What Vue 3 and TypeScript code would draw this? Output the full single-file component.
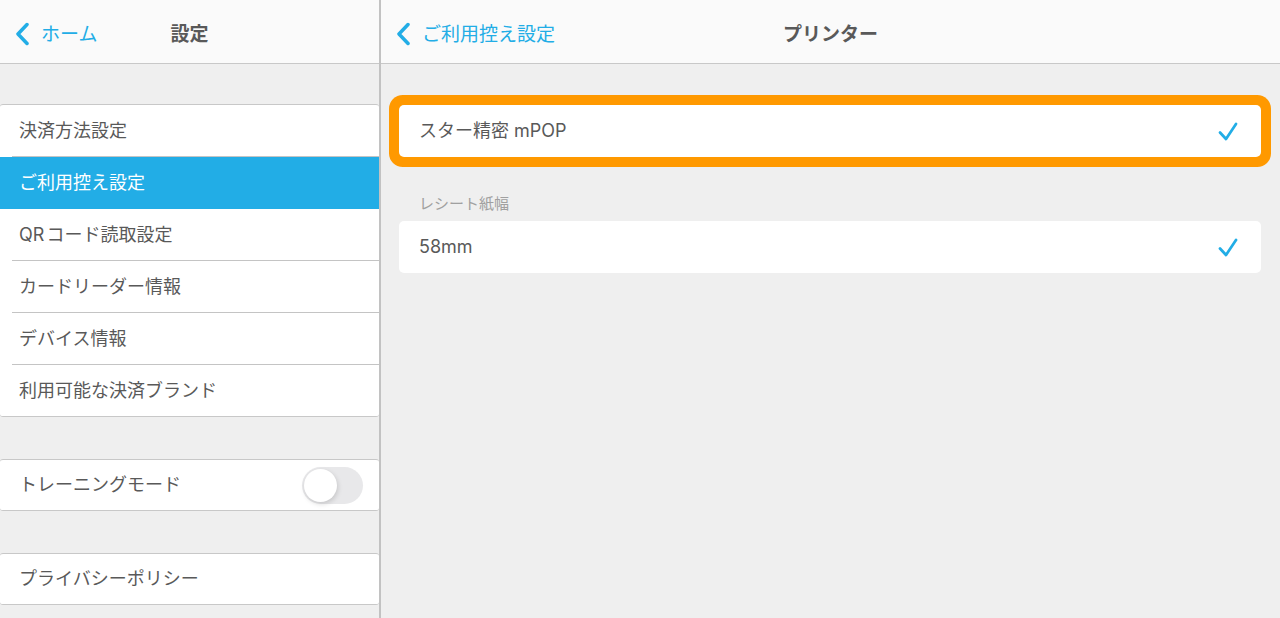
<script setup lang="ts">
import { ref } from 'vue'

interface MenuItem {
  id: string
  label: string
}

const menu: MenuItem[] = [
  { id: 'payment', label: '決済方法設定' },
  { id: 'receipt', label: 'ご利用控え設定' },
  { id: 'qr', label: 'QRコード読取設定' },
  { id: 'reader', label: 'カードリーダー情報' },
  { id: 'device', label: 'デバイス情報' },
  { id: 'brands', label: '利用可能な決済ブランド' },
]

const selected = ref<string>('receipt')
const training = ref<boolean>(false)
const printer = ref<string>('mpop')
const paper = ref<string>('58mm')
</script>

<template>
  <div class="app">
    <aside class="sidebar">
      <header class="bar">
        <a class="back" href="#home">
          <svg class="chevron" viewBox="0 0 14 24" aria-hidden="true"><path d="M12 2.5 L3 12 L12 21.5" /></svg>
          <span class="text">ホーム</span>
        </a>
        <h1 class="title text">設定</h1>
      </header>

      <nav class="group">
        <a
          v-for="item in menu"
          :key="item.id"
          class="row"
          :class="{ active: item.id === selected }"
          :href="'#' + item.id"
          @click="selected = item.id"
        ><span class="label">{{ item.label }}</span></a>
      </nav>

      <div class="group">
        <label class="row single" for="training">
          <span class="label">トレーニングモード</span>
          <input id="training" v-model="training" class="switch" type="checkbox" role="switch" />
        </label>
      </div>

      <div class="group">
        <a class="row single" href="#privacy"><span class="label">プライバシーポリシー</span></a>
      </div>
    </aside>

    <main class="detail">
      <header class="bar">
        <a class="back" href="#receipt">
          <svg class="chevron" viewBox="0 0 14 24" aria-hidden="true"><path d="M12 2.5 L3 12 L12 21.5" /></svg>
          <span class="text">ご利用控え設定</span>
        </a>
        <h2 class="title text">プリンター</h2>
      </header>

      <div class="content">
        <label class="card highlight" for="printer-mpop">
          <span>スター精密 mPOP</span>
          <span class="tick">
            <input id="printer-mpop" v-model="printer" type="radio" name="printer" value="mpop" />
            <svg viewBox="0 0 20 20" aria-hidden="true"><path d="M2 11.5 L8 18 L18 3" /></svg>
          </span>
        </label>

        <h3 class="section">レシート紙幅</h3>
        <label class="card" for="paper-58">
          <span>58mm</span>
          <span class="tick">
            <input id="paper-58" v-model="paper" type="radio" name="paper" value="58mm" />
            <svg viewBox="0 0 20 20" aria-hidden="true"><path d="M2 11.5 L8 18 L18 3" /></svg>
          </span>
        </label>
      </div>
    </main>
  </div>
</template>

<style>
body {
  margin: 0;
  background: #efefef;
}
</style>

<style scoped>
.app {
  display: grid;
  grid-template-columns: 381px 1fr;
  height: 100vh;
  overflow: hidden;
  background: #efefef;
  color: #595959;
  font-family: Inter, "Noto Sans CJK JP", sans-serif;
  font-size: 18px;
  line-height: 24px;
  text-autospace: normal;
}

a {
  color: inherit;
  text-decoration: none;
}

.sidebar {
  box-sizing: border-box;
  border-right: 2px solid #c2c2c2;
  overflow: hidden;
}

.bar {
  box-sizing: border-box;
  height: 64px;
  display: grid;
  grid-template-columns: 1fr auto 1fr;
  align-items: center;
  padding: 4px 15px 0;
  background: #fafafa;
  border-bottom: 1px solid #c8c8c8;
  font-size: 19px;
}

.text {
  padding-top: 2px;
}

.back {
  display: flex;
  align-items: center;
  gap: 12px;
  color: #22ade6;
  white-space: nowrap;
}

.chevron {
  width: 14px;
  height: 24px;
  fill: none;
  stroke: #22ade6;
  stroke-width: 3.5;
  stroke-linecap: round;
  stroke-linejoin: round;
}

.title {
  margin: 0;
  font-size: 19px;
  font-weight: 700;
}

.group {
  margin-top: 40px;
  border-top: 1px solid #c8c8c8;
  border-bottom: 1px solid #c8c8c8;
  border-radius: 3px;
  background: #fff;
}

.group + .group {
  margin-top: 42px;
}

.row {
  box-sizing: border-box;
  height: 52px;
  display: flex;
  align-items: center;
  padding-left: 12px;
}

.row .label {
  box-sizing: border-box;
  flex: 1;
  height: 100%;
  padding: 14px 0 0 7px;
}

.row:not(:last-child) .label {
  border-bottom: 1px solid #c4c4c4;
}

.row:last-child {
  height: 51px;
}

.row.single {
  height: 50px;
}

.row.single .label {
  padding-top: 13px;
}

.row.active {
  background: #22ade6;
  color: #fff;
}

.row.active .label {
  border-color: transparent;
}

.switch {
  appearance: none;
  box-sizing: border-box;
  width: 61px;
  height: 37px;
  margin: 0 16px 0 0;
  padding: 2px;
  border-radius: 19px;
  background: #e8e8ea;
}

.switch::before {
  content: "";
  display: block;
  width: 33px;
  height: 33px;
  border-radius: 50%;
  background: #fff;
  box-shadow: 1px 2px 5px rgba(0, 0, 0, 0.15);
}

.switch:checked {
  background: #22ade6;
}

.switch:checked::before {
  margin-left: auto;
}

.content {
  padding: 41px 19px 0 18px;
}

.card {
  display: flex;
  align-items: center;
  justify-content: space-between;
  box-sizing: border-box;
  height: 52px;
  padding: 0 23px 0 20px;
  background: #fff;
  border-radius: 5px;
}

.card.highlight {
  box-shadow: 0 0 0 10px #ff9900;
}

.section {
  margin: 0;
  padding: 35px 20px 5px;
  font-size: 15px;
  font-weight: 400;
  color: #a0a0a0;
}

.tick {
  display: grid;
  width: 20px;
  height: 20px;
}

.tick input,
.tick svg {
  grid-area: 1 / 1;
  width: 20px;
  height: 20px;
  margin: 0;
}

.tick input {
  appearance: none;
}

.tick svg {
  visibility: hidden;
  fill: none;
  stroke: #22ade6;
  stroke-width: 2.75;
  stroke-linecap: round;
  stroke-linejoin: round;
}

.tick input:checked + svg {
  visibility: visible;
}
</style>
